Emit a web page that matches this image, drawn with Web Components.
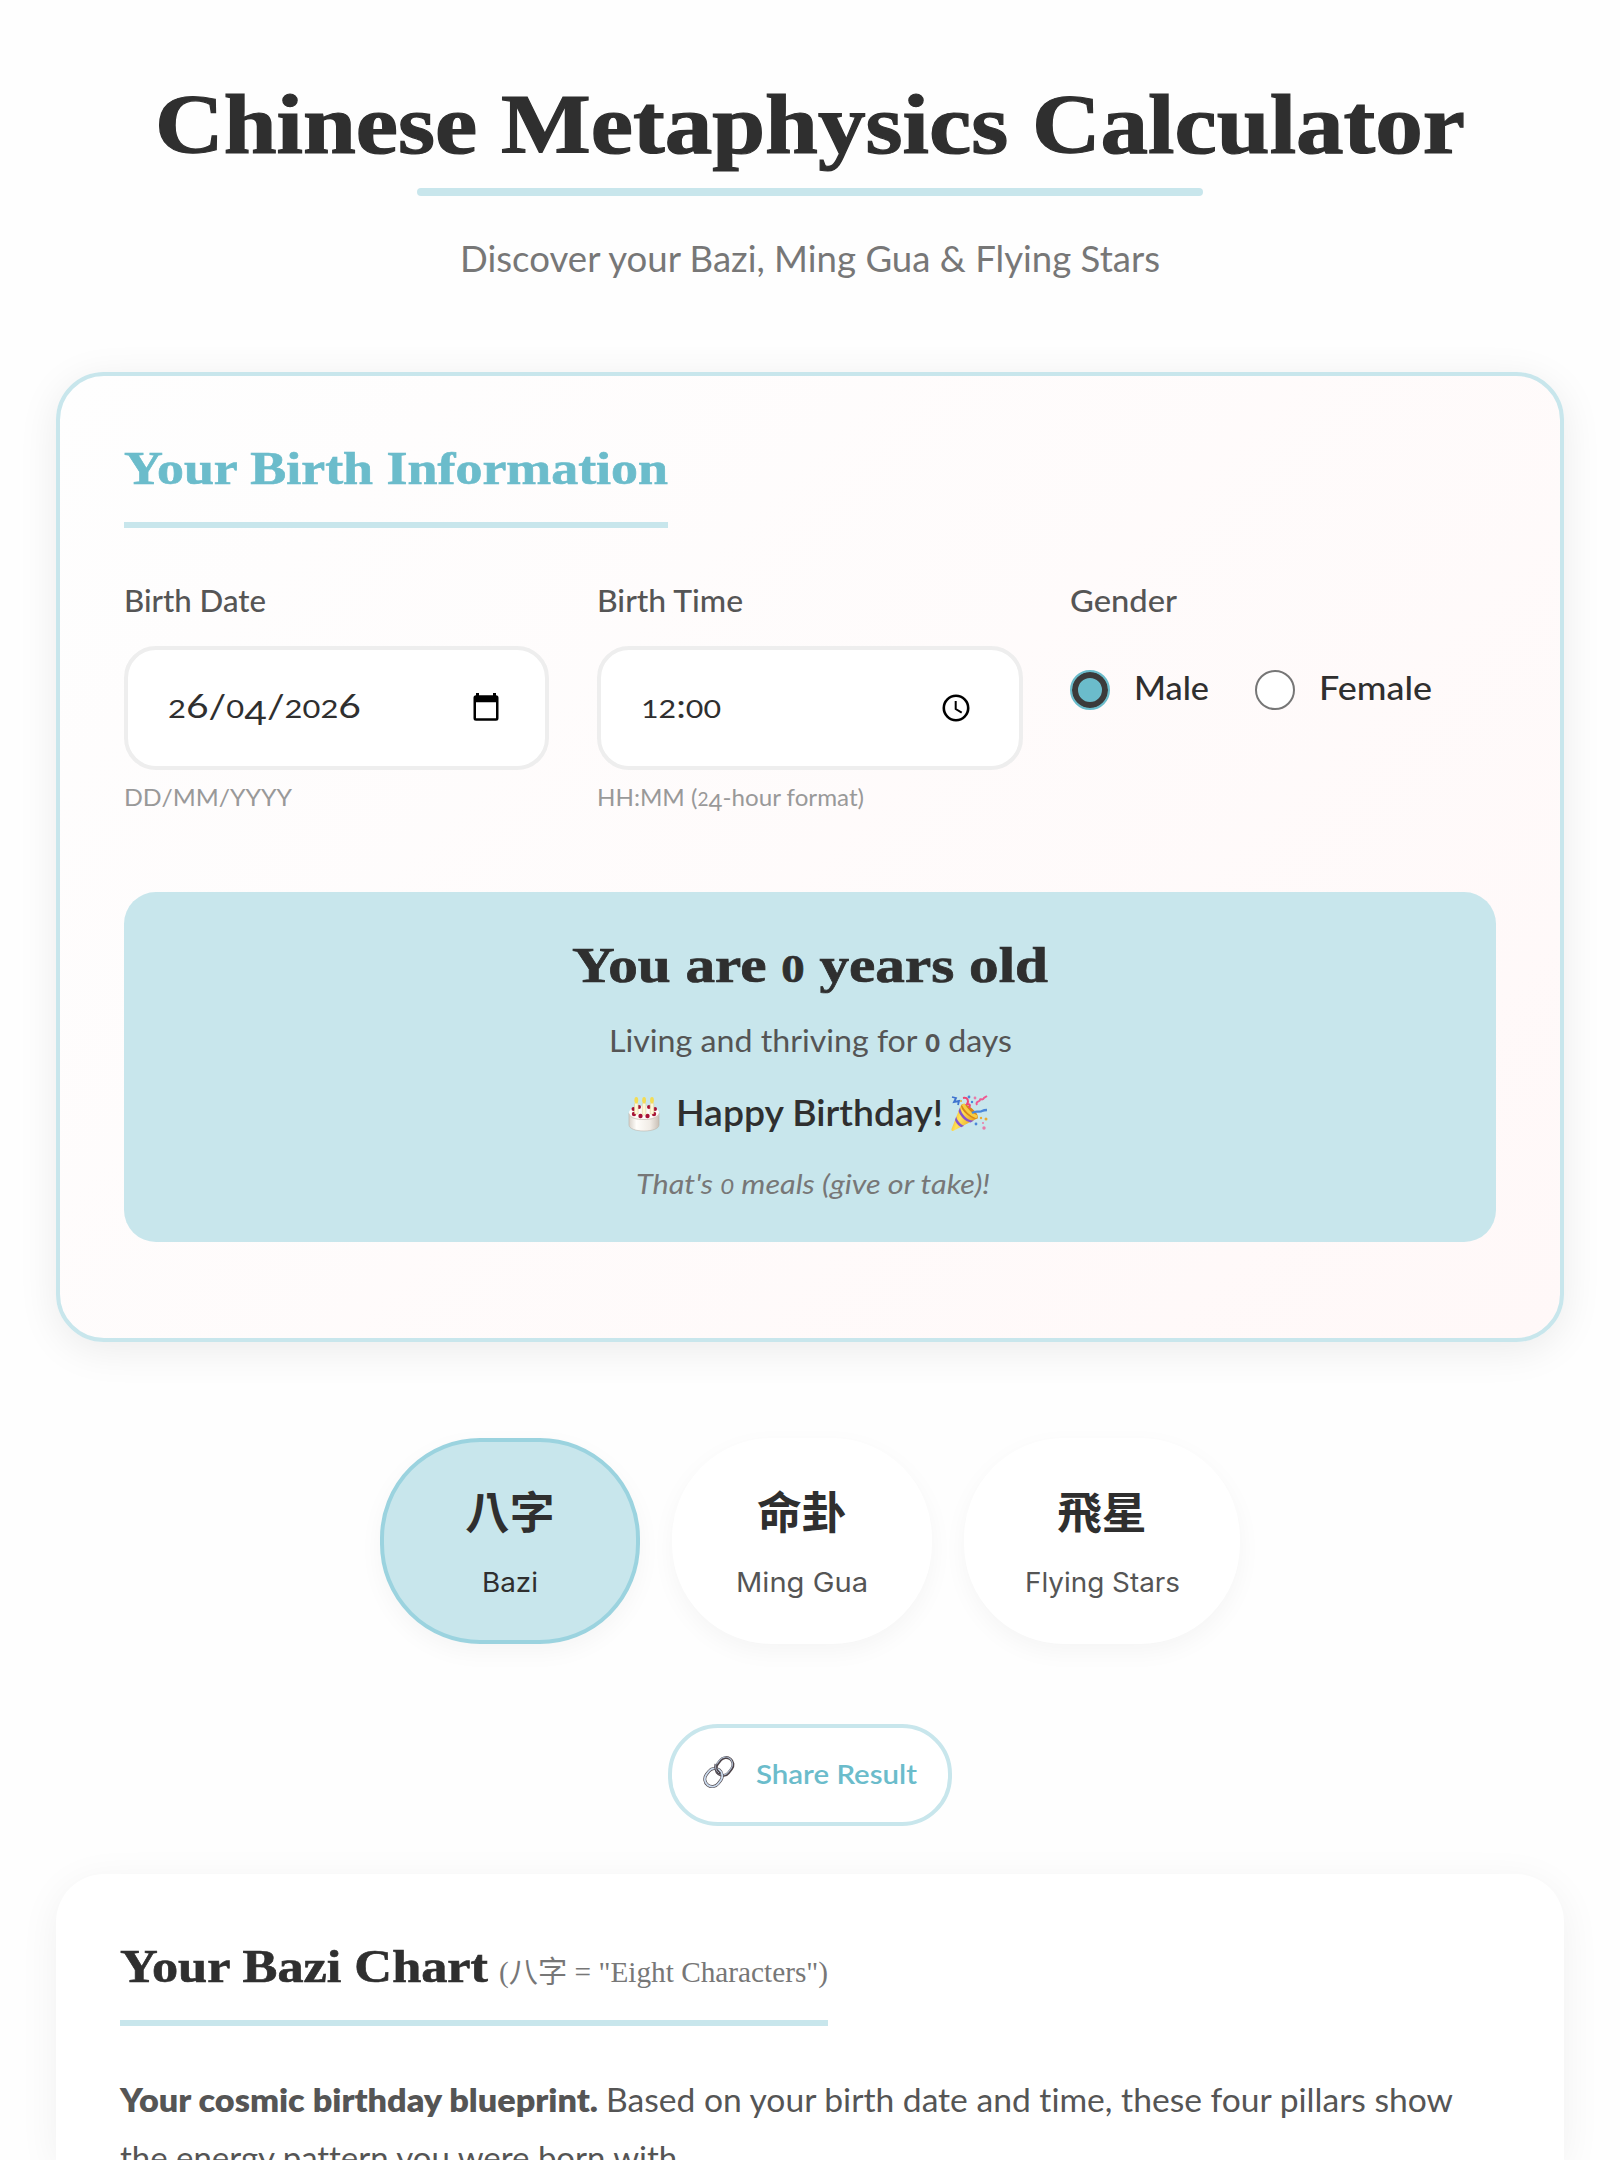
<!DOCTYPE html>
<html lang="en">
<head>
<meta charset="utf-8">
<title>Chinese Metaphysics Calculator</title>
<style>
:root{--aqua:#c8e6ec;--aqua-mid:#9bd3df;--teal:#6bbccb;--ink:#2f2f2f;--text:#555;--muted:#777;--faint:#999;
--serif:"Liberation Serif","Noto Sans CJK SC",serif;--sans:Lato,"Noto Sans CJK TC",sans-serif}
html,body{margin:0;height:2160px;overflow:hidden;background:#fefefe}
</style>
</head>
<body>
<metaphysics-app></metaphysics-app>
<script>
const define=(name,html,init)=>customElements.define(name,class extends HTMLElement{
  connectedCallback(){
    if(this.shadowRoot)return;
    this.attachShadow({mode:'open'}).innerHTML=html;
    if(init)init(this,this.shadowRoot);
  }
});

/* One line of text: b = baseline offset, h = line height, w = set width, size, weight, tone, face */
define('fit-line',`<style>
:host{display:flex;align-items:baseline;flex:none;white-space:nowrap;font-variant-ligatures:none}
:host([face=serif][weight="700"]) span{-webkit-text-stroke:.014em currentColor}
div{width:0;flex:none}
span{display:block;flex:none;line-height:1;transform-origin:0 50%}
::slotted(.osf),::slotted(.desc){line-height:0;font-style:inherit}
::slotted(.osf){font-size:.79em}
::slotted(.desc){vertical-align:-.2em}
::slotted(b){font-weight:800}
::slotted(b.osf){font-weight:900}
</style><div></div><span><slot></slot></span>`,(el,root)=>{
  const a=n=>el.getAttribute(n),s=el.style,t=root.querySelector('span');
  s.height=a('h')+'px';
  s.width=a('w')+'px';
  s.font=`${a('italic')!==null?'italic ':''}${a('weight')||400} ${a('size')}px ${a('face')==='serif'?'var(--serif)':a('face')?a('face')+',sans-serif':'var(--sans)'}`;
  s.fontVariantLigatures='none';
  s.color=`var(--${a('tone')||'text'})`;
  root.querySelector('div').style.height=a('b')+'px';
  const fit=()=>{t.style.transform='';t.style.transform=`scaleX(${a('w')/t.getBoundingClientRect().width})`};
  fit();
  requestAnimationFrame(fit);
});

define('page-header',`<style>
:host{display:flex;flex-direction:column;align-items:center;height:372px}
.bar{width:786px;height:8px;border-radius:4px;background:var(--aqua)}
</style>
<fit-line face="serif" weight="700" size="85.5" b="152.5" h="188" w="1310" tone="ink">Chinese Metaphysics Calculator</fit-line>
<div class="bar"></div>
<fit-line size="36.5" b="76" h="120" w="700" tone="muted">Discover your Bazi, Ming Gua &amp; Flying Stars</fit-line>`);

define('field-box',`<style>
:host{display:flex;flex-direction:column;align-items:flex-start;width:100%}
.box{box-sizing:border-box;width:100%;height:124px;border:4px solid #eee;border-radius:32px;background:#fff;padding:0 42px 0 40px;display:flex;justify-content:space-between;align-items:center}
</style>
<slot name="label"></slot>
<div class="box"><slot name="value"></slot><slot name="icon"></slot></div>
<slot name="hint"></slot>`);

define('radio-option',`<style>
:host{display:flex;align-items:center;gap:24px;height:40px}
i{box-sizing:border-box;width:40px;height:40px;border-radius:50%;border:2px solid #767676;background:#fff}
:host([checked]) i{border:2px solid var(--teal);background:var(--teal);box-shadow:inset 0 0 0 6px #3b3b3b}
</style><i></i><slot></slot>`);

define('age-banner',`<style>
:host{display:flex;flex-direction:column;align-items:center;height:350px;border-radius:32px;background:var(--aqua)}
.party{display:flex;height:80px;width:366px;align-items:flex-start}
svg{display:block;flex:none}
.cake{margin:34px 15px 0 0}.pop{margin:32px 0 0 7px}
.meals{margin-left:5px}
</style>
<fit-line face="serif" weight="700" size="51" b="90" h="110" w="476" tone="ink">You are <i class="osf">0</i> years old</fit-line>
<fit-line size="31.5" b="50" h="60" w="403">Living and thriving for <b class="osf">0</b> days</fit-line>
<div class="party">
<svg class="cake" width="34" height="36" viewBox="0 0 34 36">
<defs><linearGradient id="c" x2="1"><stop stop-color="#d9d2ca"/><stop offset=".25" stop-color="#fffdfa"/><stop offset=".7" stop-color="#f1ece6"/><stop offset="1" stop-color="#c9c0b6"/></linearGradient></defs>
<path d="M2 17v12c0 3.500 6.500 6 15 6s15-2.500 15-6V17z" fill="url(#c)" stroke="#bdb3aa" stroke-width=".6"/>
<ellipse cx="17" cy="16.500" rx="15" ry="6.500" fill="#fdfaf7"/><path d="M2 18c1 4 7 5.500 15 5.500S31 22 32 18" fill="none" stroke="#d6cdc4" stroke-width="1"/>
<g fill="#a81235"><circle cx="12" cy="11" r="2"/><circle cx="22" cy="11" r="2"/><circle cx="6.500" cy="13" r="2"/><circle cx="28" cy="13" r="2"/><circle cx="7" cy="18" r="2.200"/><circle cx="13.500" cy="20" r="2.200"/><circle cx="20.500" cy="20" r="2.200"/><circle cx="27" cy="18" r="2.200"/></g>
<g fill="#fff6d7" stroke="#d9c98a" stroke-width=".5"><rect x="7.500" y="7" width="3.600" height="11" rx="1"/><rect x="15.300" y="7" width="3.600" height="12" rx="1"/><rect x="23.200" y="7" width="3.600" height="11" rx="1"/></g>
<g fill="#f3dc55"><ellipse cx="9.300" cy="4.300" rx="1.900" ry="3.300"/><ellipse cx="17.100" cy="4.300" rx="1.900" ry="3.300"/><ellipse cx="25" cy="4.300" rx="1.900" ry="3.300"/></g>
</svg>
<fit-line weight="600" size="36" b="64" h="80" w="267" tone="ink">Happy Birthday!</fit-line>
<svg class="pop" width="38" height="38" viewBox="0 0 38 38">
<defs><linearGradient id="y" x2="1" y2=".4"><stop stop-color="#e99a1b"/><stop offset=".45" stop-color="#ffe357"/><stop offset="1" stop-color="#e79a1c"/></linearGradient></defs>
<path d="M11 11 1.500 35c-.4 1.500.6 2.300 2 1.700L28 24z" fill="url(#y)"/>
<path d="M10 13.500c1.500 7 7.500 13.500 14 13l-3.400 1.900C15 27.500 10 22 8.600 17zM6.200 22.500c1 4.500 4.500 8 8 9.200l-3 1.500C8 31.500 5.800 28.800 5 26z" fill="#8554cc"/>
<ellipse cx="19.500" cy="17.500" rx="4" ry="10.500" transform="rotate(-50 19.500 17.500)" fill="#d88818"/><path d="M13 10c3 6 9 11 14 13" stroke="#f7cd42" stroke-width="3" fill="none"/>
<path d="M13 4c5-1 6 3 4 6 4 0 3 2 2 4" stroke="#ef4777" stroke-width="2" fill="none"/>
<path d="m2 3 4 1-2 4 5-1-1 4" stroke="#3e73cf" stroke-width="1.800" fill="none"/>
<path d="M22 19c4-3 8 0 10-2 2-1 3-1 5-1" stroke="#4a87d9" stroke-width="2.300" fill="none"/>
<path d="M27 11c-2-4 3-3 3-5s3 1 4-2l3-2" stroke="#ef5a93" stroke-width="2" fill="none"/>
<g fill="#4a87d9"><circle cx="19" cy="3" r="1.400"/><circle cx="26" cy="30" r="1.400"/><circle cx="22" cy="8" r="1.200"/></g><g fill="#e9aa32"><circle cx="36" cy="25" r="1.500"/><circle cx="31" cy="24" r="1.200"/><circle cx="11" cy="7" r="1"/></g><g fill="#e87ba8"><circle cx="34" cy="34" r="1.700"/><circle cx="25" cy="4" r="1.400"/><circle cx="33" cy="29" r="1"/></g>
</svg>
</div>
<fit-line class="meals" italic size="27.500" b="52" h="98" w="354" tone="muted">That's <i class="osf">0</i> meals (give or take)!</fit-line>`);

define('birth-card',`<style>
:host{display:block;box-sizing:border-box;height:970px;border:4px solid var(--aqua);border-radius:48px;padding:0 64px;background:linear-gradient(135deg,#fefefe 0%,#fff8f8 100%);box-shadow:0 8px 40px rgba(0,0,0,.08)}
.head{width:544px;border-bottom:6px solid var(--aqua)}
.grid{display:grid;grid-template-columns:repeat(3,1fr);gap:48px;height:364px}
.radios{display:flex;gap:46px;padding-top:24px}
.gender{margin-left:-1px}
svg{display:block}
</style>
<div class="head"><fit-line face="serif" weight="700" size="47" b="108" h="146" w="544" tone="teal">Your Birth Information</fit-line></div>
<div class="grid">
<field-box>
<fit-line slot="label" weight="500" size="30.400" b="84" h="118" w="142">Birth Date</fit-line>
<fit-line slot="value" size="32.500" b="67.500" h="116" w="193" tone="ink"><i class="osf">2</i>6/<i class="osf">0</i><i class="desc">4</i>/<i class="osf">202</i>6</fit-line>
<svg slot="icon" style="margin-bottom:2px" width="32" height="32" viewBox="0 0 32 32"><path d="M6.500 2v5M23.500 2v5" stroke="#000" stroke-width="3"/><path fill-rule="evenodd" d="M5 4.300h20a2.500 2.500 0 0 1 2.500 2.500v20.400a2.500 2.500 0 0 1-2.500 2.500H5a2.500 2.500 0 0 1-2.500-2.500V6.800A2.500 2.500 0 0 1 5 4.300zm0 6.900v16h20v-16z"/></svg>
<fit-line slot="hint" size="24" b="36" h="60" w="168" tone="faint">DD/MM/YYYY</fit-line>
</field-box>
<field-box>
<fit-line slot="label" weight="500" size="30.400" b="84" h="118" w="146">Birth Time</fit-line>
<fit-line slot="value" size="32.500" b="67.500" h="116" w="80" tone="ink"><i class="osf">12</i>:<i class="osf">00</i></fit-line>
<svg slot="icon" style="margin-right:5px" width="32" height="32" viewBox="0 0 32 32"><g fill="none" stroke="#000" stroke-width="2.600"><circle cx="16" cy="16" r="12.200"/><path stroke-width="2" d="M15.700 9v8l6 3.600"/></g></svg>
<fit-line slot="hint" size="24" b="36" h="60" w="267" tone="faint">HH:MM (<i class="osf">2</i><i class="desc">4</i>-hour format)</fit-line>
</field-box>
<div class="gender">
<fit-line weight="500" size="30.400" b="84" h="118" w="107">Gender</fit-line>
<div class="radios">
<radio-option checked><fit-line weight="500" size="32" b="30" h="40" w="75" tone="ink">Male</fit-line></radio-option>
<radio-option><fit-line weight="500" size="32" b="30" h="40" w="113" tone="ink">Female</fit-line></radio-option>
</div>
</div>
</div>
<age-banner></age-banner>`);

define('tab-pill',`<style>
:host{box-sizing:border-box;display:flex;flex-direction:column;align-items:center;height:206px;border:4px solid #fff;border-radius:100px;background:#fff;box-shadow:0 8px 24px rgba(0,0,0,.04)}
:host([active]){background:var(--aqua);border-color:var(--aqua-mid)}
</style><slot></slot>`);

define('tab-row',`<style>
:host{display:flex;justify-content:center;gap:32px;margin-top:96px}
tab-pill{width:260px}tab-pill:last-child{width:276px}
</style>
<tab-pill active><fit-line face="'Noto Sans CJK TC'" weight="700" size="44.800" b="87" h="110" w="89.600" tone="ink">八字</fit-line><fit-line face="Inter" size="27" b="40" h="60" w="56" tone="ink">Bazi</fit-line></tab-pill>
<tab-pill><fit-line face="'Noto Sans CJK TC'" weight="700" size="44.800" b="87" h="110" w="89.600" tone="ink">命卦</fit-line><fit-line face="Inter" size="27" b="40" h="60" w="132">Ming Gua</fit-line></tab-pill>
<tab-pill><fit-line face="'Noto Sans CJK TC'" weight="700" size="44.800" b="87" h="110" w="89.600" tone="ink">飛星</fit-line><fit-line face="Inter" size="27" b="40" h="60" w="155">Flying Stars</fit-line></tab-pill>`);

define('share-button',`<style>
:host{box-sizing:border-box;display:flex;width:284px;height:102px;margin:80px auto 0;border:4px solid var(--aqua);border-radius:50px;background:#fff;padding-left:30px;gap:20px}
svg{flex:none;margin-top:27px}
</style>
<svg width="34" height="34" viewBox="0 0 34 34"><g fill="none">
<rect x="-9.500" y="-7" width="19" height="14" rx="7" transform="translate(22.500 11.500) rotate(-52)" stroke="#4b4146" stroke-width="2.800"/>
<rect x="-9.500" y="-7" width="19" height="14" rx="7" transform="translate(22 11) rotate(-52)" stroke="#a9b6c8" stroke-width="1.200"/>
<rect x="-9.500" y="-7.500" width="19" height="15" rx="7.500" transform="translate(11.500 22.500) rotate(-52)" stroke="#50474b" stroke-width="3"/>
<rect x="-9.500" y="-7.500" width="19" height="15" rx="7.500" transform="translate(11.500 22.500) rotate(-52)" stroke="#cbdbee" stroke-width="1.800"/>
<path d="M14 9c-1 4 0 7 4 10" stroke="#4b4146" stroke-width="3"/><path d="M14 9c-1 4 0 7 3 9" stroke="#a9b6c8" stroke-width="1"/></g></svg>
<fit-line weight="600" size="27.500" b="56" h="90" w="161" tone="teal">Share Result</fit-line>`);

define('bazi-card',`<style>
:host{display:block;box-sizing:border-box;height:286px;margin-top:48px;border-radius:48px 48px 0 0;background:#fff;padding:0 64px;box-shadow:0 8px 40px rgba(0,0,0,.06)}
.head{display:flex;gap:11px;width:708px;border-bottom:6px solid var(--aqua)}
.line{display:flex;gap:8px}
</style>
<div class="head"><fit-line face="serif" weight="700" size="47" b="108" h="146" w="368" tone="ink">Your Bazi Chart</fit-line>
<fit-line face="serif" size="29.500" b="108" h="146" w="329" tone="muted">(八字 = "Eight Characters")</fit-line></div>
<div class="line"><fit-line weight="800" size="32" b="86" h="86" w="478">Your cosmic birthday blueprint.</fit-line>
<fit-line size="32" b="86" h="86" w="847">Based on your birth date and time, these four pillars show</fit-line></div>
<fit-line size="32" b="58" h="48" w="565">the energy pattern you were born with.</fit-line>`);

define('metaphysics-app',`<style>:host{display:block;box-sizing:border-box;width:1620px;padding:0 56px}</style>
<page-header></page-header><birth-card></birth-card><tab-row></tab-row><share-button></share-button><bazi-card></bazi-card>`);
</script>
</body>
</html>
